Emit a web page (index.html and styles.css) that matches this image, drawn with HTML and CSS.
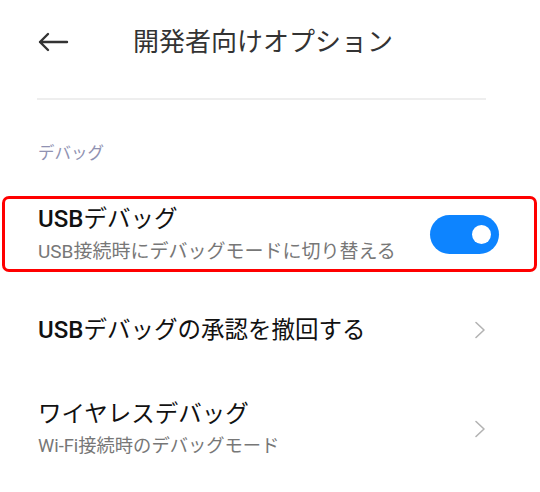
FILE: index.html
```html
<!DOCTYPE html>
<html lang="ja">
  <head>
    <meta charset="UTF-8" />
    <meta name="viewport" content="width=device-width, initial-scale=1.0" />
    <title>開発者向けオプション</title>
    <link rel="stylesheet" href="styles.css">
  </head>
  <body>
    <div class="header">
      <svg class="back" width="32" height="20" viewBox="0 0 32 20">
        <path d="M30 10H3M11 2L3 10L11 18" fill="none" stroke="#333" stroke-width="2.4" stroke-linecap="round" stroke-linejoin="round"/>
      </svg>
      <span class="title">開発者向けオプション</span>
    </div>
    <div class="divider"></div>

    <div class="section">デバッグ</div>

    <div class="item highlight">
      <div class="text">
        <div class="label"><span class="latin">USB</span>デバッグ</div>
        <div class="sub big">USB接続時にデバッグモードに切り替える</div>
      </div>
      <div class="toggle on"><div class="knob"></div></div>
    </div>

    <div class="item single">
      <div class="text">
        <div class="label"><span class="latin">USB</span>デバッグの承認を撤回する</div>
      </div>
      <svg class="chevron" width="12" height="18" viewBox="0 0 12 18">
        <path d="M2 1.5L10 9L2 16.5" fill="none" stroke="#b3b3b3" stroke-width="1.6" stroke-linecap="round" stroke-linejoin="round"/>
      </svg>
    </div>

    <div class="item wireless">
      <div class="text">
        <div class="label">ワイヤレスデバッグ</div>
        <div class="sub">Wi-Fi接続時のデバッグモード</div>
      </div>
      <svg class="chevron" width="12" height="18" viewBox="0 0 12 18">
        <path d="M2 1.5L10 9L2 16.5" fill="none" stroke="#b3b3b3" stroke-width="1.6" stroke-linecap="round" stroke-linejoin="round"/>
      </svg>
    </div>
  </body>
</html>
```

FILE: styles.css
```css
* {
  margin: 0;
  padding: 0;
  box-sizing: border-box;
}

body {
  background: #ffffff;
  font-family: Roboto, "Noto Sans CJK JP", sans-serif;
  color: #000;
  width: 540px;
}

.header {
  height: 84px;
  display: flex;
  align-items: center;
  padding-left: 37px;
}

.back {
  display: block;
}

.title {
  margin-left: 64px;
  font-size: 26px;
  color: #333333;
  line-height: 1;
}

.divider {
  margin: 14px 54px 0 37px;
  height: 2px;
  background: #eeeeee;
}

.section {
  margin-top: 42px;
  padding-left: 38px;
  font-size: 16.5px;
  line-height: 24px;
  color: #9092b2;
}

.item {
  display: flex;
  align-items: center;
  justify-content: space-between;
  padding: 0 54px 0 38px;
  height: 90px;
}

.item.highlight {
  margin: 30px 3px 0 2px;
  height: 76px;
  border: 3px solid #ff0000;
  border-radius: 7px;
  padding: 0 35px 0 33px;
}

.item.single {
  margin-top: 13px;
}

.item.wireless {
  margin-top: 9px;
}

.label {
  font-size: 23.5px;
  line-height: 30px;
  color: #111111;
}

.latin {
  font-weight: 500;
  font-size: 24px;
}

.sub {
  font-size: 18.3px;
  line-height: 26px;
  color: #777777;
  margin-top: 4px;
}

.sub.big {
  font-size: 19px;
  margin-top: 5px;
}

.toggle {
  width: 69px;
  height: 39px;
  border-radius: 20px;
  background: #0d84ff;
  display: flex;
  align-items: center;
  justify-content: flex-end;
  padding-right: 8px;
}

.knob {
  width: 19px;
  height: 19px;
  border-radius: 50%;
  background: #ffffff;
}

.chevron {
  display: block;
}
```
